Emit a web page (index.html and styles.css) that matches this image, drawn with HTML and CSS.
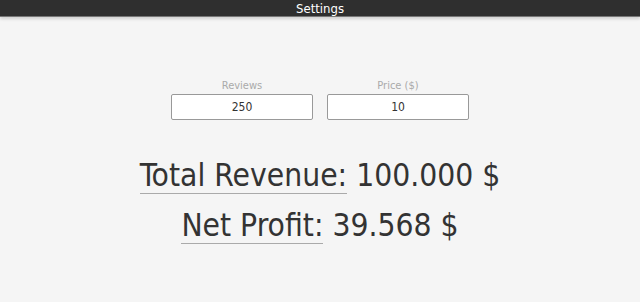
FILE: index.html
```html
<!DOCTYPE html>
<html lang="en">

<head>
	<meta charset="UTF-8">
	<title>Settings</title>
	<link rel="stylesheet" href="styles.css">
</head>

<body>
	<div class="topbar">Settings</div>
	<div class="main">
		<div class="fields">
			<label class="field">
				<span class="field-label">Reviews</span>
				<input class="field-input" type="text" value="250">
			</label>
			<label class="field">
				<span class="field-label">Price ($)</span>
				<input class="field-input" type="text" value="10">
			</label>
		</div>
		<div class="result"><span class="result-label">Total Revenue:</span> 100.000 $</div>
		<div class="result"><span class="result-label">Net Profit:</span> 39.568 $</div>
	</div>
</body>

</html>
```

FILE: styles.css
```css
body {
	margin: 0;
	background: #f5f5f5;
	font-family: "DejaVu Sans Condensed", "DejaVu Sans", sans-serif;
	font-stretch: condensed;
	color: #333;
}

.topbar {
	height: 16px;
	line-height: 17px;
	background: #2f2f2f;
	color: #fff;
	font-size: 13px;
	text-align: center;
	border-bottom: 1px solid #777;
	box-shadow: 0 2px 3px rgba(0, 0, 0, 0.15);
}

.main {
	display: flex;
	flex-direction: column;
	align-items: center;
	padding-top: 61px;
}

.fields {
	display: flex;
	gap: 14px;
	margin-bottom: 30px;
}

.field {
	display: flex;
	flex-direction: column;
	align-items: center;
}

.field-label {
	font-size: 11px;
	line-height: 16px;
	color: #aaa;
}

.field-input {
	width: 142px;
	height: 26px;
	box-sizing: border-box;
	border: 1px solid #999;
	border-radius: 2px;
	background: #fff;
	text-align: center;
	font: 12px "DejaVu Sans Condensed", "DejaVu Sans", sans-serif;
	font-stretch: condensed;
	color: #333;
	padding: 0;
}

.result {
	font-size: 31.5px;
	line-height: 50px;
}

.result-label {
	border-bottom: 1px solid #aaa;
}
```
